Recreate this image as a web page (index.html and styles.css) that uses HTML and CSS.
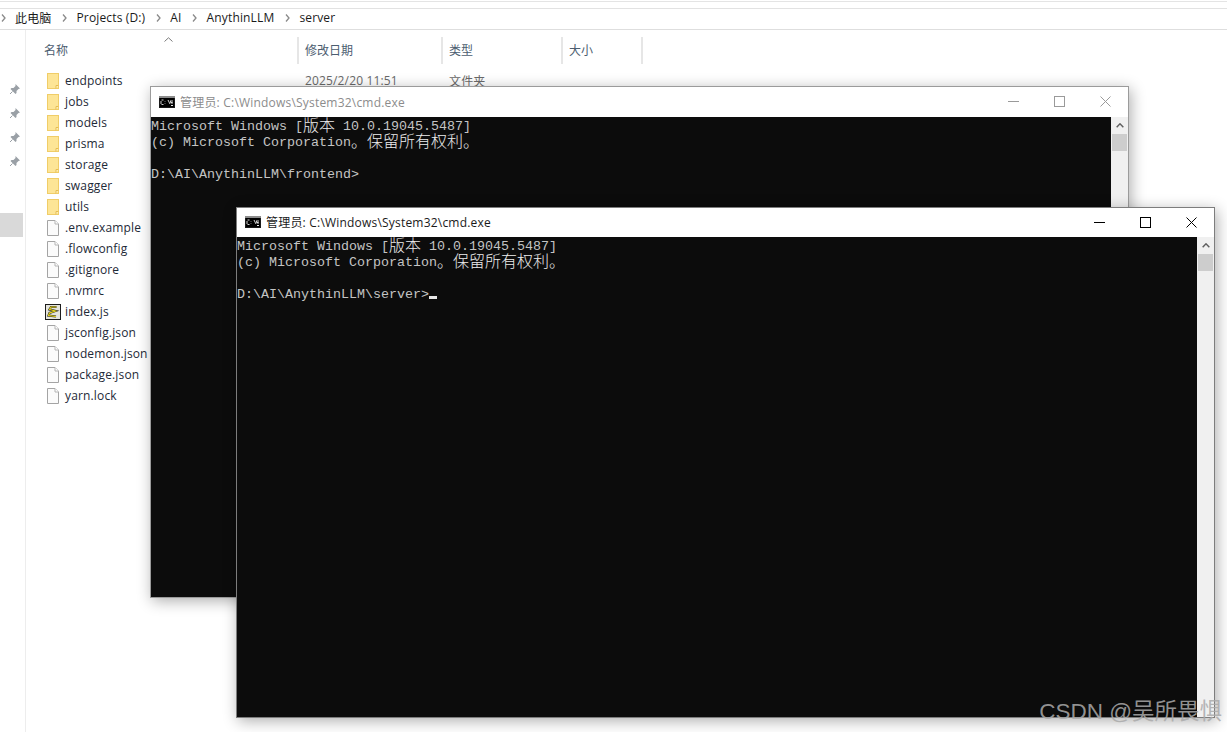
FILE: index.html
```html
<!DOCTYPE html>
<html lang="zh-CN">
<head>
<meta charset="utf-8">
<title>AnythinLLM server</title>
<link rel="stylesheet" href="styles.css">
</head>
<body>
<svg class="defs" width="0" height="0" aria-hidden="true">
  <defs>
    <symbol id="folder" viewBox="0 0 12 16">
      <rect x=".5" y=".5" width="11" height="15" fill="#fde596" stroke="#f0cd68"/>
      <path d="M9 15.500V12.500h2.500" fill="#fff2c4" stroke="#e6bd52"/>
    </symbol>
    <symbol id="file" viewBox="0 0 12 16">
      <path d="M.5.500h7.500l3.500 3.500v11.500H.5z" fill="#fbfbfb" stroke="#a4a4a4"/>
      <path d="M8 .5V4h3.500" fill="#fff" stroke="#b4b4b4"/>
    </symbol>
    <symbol id="js" viewBox="0 0 16 16">
      <rect x=".5" y=".5" width="15" height="15" fill="#e4e4dc" stroke="#1c1c1c"/>
      <path d="M11.500 3H6L4.500 5.500l6 1.500-6 2-1 2.500 7.500 1" fill="none" stroke="#2a2a2a" stroke-width="2.200"/>
      <path d="M11.500 3H6L4.500 5.500l6 1.500-6 2-1 2.500 7.500 1" fill="none" stroke="#f2dd1a" stroke-width="1.100"/>
    </symbol>
    <symbol id="pin" viewBox="0 0 12 12">
      <path d="M6.500 1l4.500 4.500-1.500.5-2 2 0 2-1 1-5-5 1-1 2 0 2-2z" fill="#9aa0a6"/>
      <path d="M3.500 8.500L1 11" stroke="#9aa0a6" fill="none"/>
    </symbol>
    <symbol id="chev" viewBox="0 0 5 8">
      <path d="M1 .5l3 3.500-3 3.500" fill="none" stroke="#8a8a8a" stroke-width="1.300"/>
    </symbol>
    <symbol id="cmd" viewBox="0 0 16 12">
      <rect width="16" height="12" fill="#1a1a1a"/>
      <rect x="1" y="2" width="14" height="9" fill="#000"/>
      <rect x="0" y="0" width="16" height="2" fill="#8c8c8c"/>
      <path d="M2.500 4h2M2 5v3M2.500 8.500h2M6 5v.5M6 7.500v.5M9 4l2 4M11.500 4.500v2h2M13 4v4" fill="none" stroke="#e8e8e8" stroke-width=".9"/>
      <rect x="12" y="9" width="2" height="1" fill="#e8e8e8"/>
    </symbol>
  </defs>
</svg>

<div class="desktop">
  <div class="explorer">
    <div class="top-strip"></div>
    <nav class="crumbs">
      <svg class="chev"><use href="#chev"/></svg><span>此电脑</span>
      <svg class="chev"><use href="#chev"/></svg><span>Projects (D:)</span>
      <svg class="chev"><use href="#chev"/></svg><span>AI</span>
      <svg class="chev"><use href="#chev"/></svg><span>AnythinLLM</span>
      <svg class="chev"><use href="#chev"/></svg><span>server</span>
    </nav>
    <div class="body">
      <aside class="quick">
        <svg class="pin"><use href="#pin"/></svg>
        <svg class="pin"><use href="#pin"/></svg>
        <svg class="pin"><use href="#pin"/></svg>
        <svg class="pin"><use href="#pin"/></svg>
        <div class="quick-selected"></div>
      </aside>
      <main class="list">
        <div class="head">
          <div class="col col-name">名称<svg class="sort" viewBox="0 0 9 5"><path d="M.5 4.500L4.500.8l4 3.700" fill="none" stroke="#7a7a7a"/></svg></div>
          <div class="col">修改日期</div>
          <div class="col">类型</div>
          <div class="col">大小</div>
        </div>
        <div class="rows">
          <div class="row"><svg class="ico"><use href="#folder"/></svg><span>endpoints</span><em class="date">2025/2/20 11:51</em><em class="kind">文件夹</em></div>
          <div class="row"><svg class="ico"><use href="#folder"/></svg><span>jobs</span></div>
          <div class="row"><svg class="ico"><use href="#folder"/></svg><span>models</span></div>
          <div class="row"><svg class="ico"><use href="#folder"/></svg><span>prisma</span></div>
          <div class="row"><svg class="ico"><use href="#folder"/></svg><span>storage</span></div>
          <div class="row"><svg class="ico"><use href="#folder"/></svg><span>swagger</span></div>
          <div class="row"><svg class="ico"><use href="#folder"/></svg><span>utils</span></div>
          <div class="row"><svg class="ico"><use href="#file"/></svg><span>.env.example</span></div>
          <div class="row"><svg class="ico"><use href="#file"/></svg><span>.flowconfig</span></div>
          <div class="row"><svg class="ico"><use href="#file"/></svg><span>.gitignore</span></div>
          <div class="row"><svg class="ico"><use href="#file"/></svg><span>.nvmrc</span></div>
          <div class="row"><svg class="ico ico-js"><use href="#js"/></svg><span>index.js</span></div>
          <div class="row"><svg class="ico"><use href="#file"/></svg><span>jsconfig.json</span></div>
          <div class="row"><svg class="ico"><use href="#file"/></svg><span>nodemon.json</span></div>
          <div class="row"><svg class="ico"><use href="#file"/></svg><span>package.json</span></div>
          <div class="row"><svg class="ico"><use href="#file"/></svg><span>yarn.lock</span></div>
        </div>
      </main>
    </div>
  </div>

  <section class="win win-back">
    <header class="titlebar">
      <svg class="cmd-ico"><use href="#cmd"/></svg>
      <span class="title">管理员: C:\Windows\System32\cmd.exe</span>
      <div class="controls">
        <svg viewBox="0 0 11 11"><path d="M0 5.500h11"/></svg>
        <svg viewBox="0 0 11 11"><rect x=".5" y=".5" width="10" height="10"/></svg>
        <svg viewBox="0 0 11 11"><path d="M.5.500l10 10M10.500.500l-10 10"/></svg>
      </div>
    </header>
    <div class="client">
      <div class="console"><div class="line">Microsoft Windows [<b>版本</b> 10.0.19045.5487]</div><div class="line">(c) Microsoft Corporation<b>。保留所有权利。</b></div><div class="line">&nbsp;</div><div class="line">D:\AI\AnythinLLM\frontend&gt;</div></div>
      <div class="scrollbar"><svg class="up" viewBox="0 0 9 6"><path d="M.5 5L4.500 1l4 4" fill="none" stroke="#606060" stroke-width="1.800"/></svg><div class="thumb"></div></div>
    </div>
  </section>

  <section class="win win-front">
    <header class="titlebar">
      <svg class="cmd-ico"><use href="#cmd"/></svg>
      <span class="title">管理员: C:\Windows\System32\cmd.exe</span>
      <div class="controls">
        <svg viewBox="0 0 11 11"><path d="M0 5.500h11"/></svg>
        <svg viewBox="0 0 11 11"><rect x=".5" y=".5" width="10" height="10"/></svg>
        <svg viewBox="0 0 11 11"><path d="M.5.500l10 10M10.500.500l-10 10"/></svg>
      </div>
    </header>
    <div class="client">
      <div class="console"><div class="line">Microsoft Windows [<b>版本</b> 10.0.19045.5487]</div><div class="line">(c) Microsoft Corporation<b>。保留所有权利。</b></div><div class="line">&nbsp;</div><div class="line">D:\AI\AnythinLLM\server&gt;<i class="cursor"></i></div></div>
      <div class="scrollbar"><svg class="up" viewBox="0 0 9 6"><path d="M.5 5L4.500 1l4 4" fill="none" stroke="#606060" stroke-width="1.800"/></svg><div class="thumb"></div></div>
    </div>
  </section>

  <div class="watermark">CSDN @吴所畏惧</div>
</div>
</body>
</html>
```
FILE: styles.css
```css
* { box-sizing: border-box; }
html, body { margin: 0; padding: 0; height: 100%; background: #fff; overflow: hidden; }
.defs { position: absolute; }
.desktop {
  position: relative;
  width: 1227px;
  height: 732px;
  overflow: hidden;
  font-family: "Open Sans", "Noto Sans CJK SC", sans-serif;
  font-size: 12px;
  color: #1e2a38;
}

/* explorer */
.explorer { display: flex; flex-direction: column; height: 100%; }
.top-strip { height: 8px; border-top: 1px solid #e4e4e4; border-bottom: 1px solid #e2e2e2; margin-top: 1px; flex: none; }
.crumbs {
  display: flex;
  align-items: center;
  height: 21px;
  padding: 0 0 3px 1px;
  border-bottom: 1px solid #dedede;
  flex: none;
  white-space: nowrap;
  color: #1a1a1a;
  letter-spacing: .15px;
}
.chev { width: 5px; height: 8px; margin-left: 10.500px; margin-right: 9.500px; flex: none; }
.crumbs .chev:first-child { margin-left: 0; margin-right: 9px; }
.body { display: flex; flex: 1; min-height: 0; }
.quick {
  width: 26px;
  flex: none;
  border-right: 1px solid #ededed;
  display: flex;
  flex-direction: column;
  align-items: flex-end;
  padding: 53px 4px 0 0;
  gap: 12px;
}
.pin { width: 12px; height: 12px; flex: none; }
.quick-selected { align-self: flex-start; width: 23px; height: 24px; margin: 34px 0 0 0; background: #d9d9d9; }
.list { flex: 1; min-width: 0; }
.head { display: grid; grid-template-columns: 273px 144px 120px 80px; height: 27px; margin-top: 7px; }
.col { border-right: 2px solid #e6e6e6; padding: 5px 0 0 6px; color: #4c5d70; position: relative; line-height: 18px; }
.col-name { padding-left: 18px; }
.sort { position: absolute; left: 138px; top: 0; width: 9px; height: 5px; }
.rows { padding-top: 6px; }
.row { display: flex; align-items: center; height: 21px; position: relative; padding-left: 21px; letter-spacing: .15px; }
.ico { width: 12px; height: 16px; flex: none; margin-right: 6px; }
.ico-js { width: 16px; height: 16px; margin: 0 4px 0 -2px; }
.date, .kind { position: absolute; font-style: normal; color: #6a6a6a; top: 2px; }
.date { left: 279px; }
.kind { left: 423px; }

/* console windows on the desktop */
.win {
  position: absolute;
  width: 979px;
  display: flex;
  flex-direction: column;
  border: 1px solid #9b9b9b;
  background: #fff;
  box-shadow: 2px 3px 14px rgba(0, 0, 0, .32);
}
.win-back { left: 150px; top: 86px; height: 512px; }
.win-front { left: 236px; top: 207px; height: 511px; border-color: #7d7d7d; }
.titlebar { height: 30px; flex: none; display: flex; align-items: center; padding: 0 0 1px 8px; background: #fff; }
.win-front .titlebar { height: 29px; }
.cmd-ico { width: 16px; height: 12px; flex: none; margin-right: 5px; }
.title { color: #1a1a1a; white-space: nowrap; letter-spacing: .2px; }
.win-back .title { color: #8c8c8c; }
.controls { margin-left: auto; display: flex; gap: 35px; padding-right: 17px; }
.controls svg { width: 11px; height: 11px; fill: none; stroke: #000; stroke-width: 1; display: block; }
.win-back .controls svg { stroke: #9a9a9a; }
.client { flex: 1; min-height: 0; display: flex; }
.console {
  flex: 1;
  min-width: 0;
  background: #0c0c0c;
  color: #c4c4c4;
  font-family: "Liberation Mono", "Noto Sans CJK SC", monospace;
  font-size: 13.33px;
  line-height: 16px;
  white-space: pre;
  padding-top: 2px;
}
.line { height: 16px; overflow: visible; }
.line b { font-family: "Noto Sans CJK SC", sans-serif; font-weight: 300; font-size: 16px; line-height: 0; color: #ececec; vertical-align: -1px; }
.cursor { display: inline-block; width: 8px; height: 3px; background: #e6e6e6; vertical-align: -1px; }
.scrollbar { width: 17px; flex: none; background: #f0f0f0; position: relative; padding: 17px 0 0 1px; }
.up { position: absolute; left: 5px; top: 6px; width: 8px; height: 5px; }
.thumb { height: 17px; background: #cdcdcd; width: 15px; }

/* watermark */
.watermark {
  position: absolute;
  right: 5px;
  bottom: 7px;
  font-family: "Liberation Sans", "Noto Sans CJK SC", sans-serif;
  font-size: 22.5px;
  line-height: 26px;
  color: rgba(170, 170, 170, .85);
  white-space: nowrap;
}
```
